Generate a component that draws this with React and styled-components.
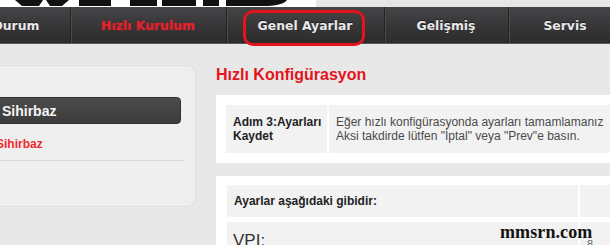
import React from "react";
import styled, { createGlobalStyle } from "styled-components";

const Global = createGlobalStyle`
  html, body { margin: 0; padding: 0; }
  body {
    background: #e8e8e8;
    font-family: "Liberation Sans", Arial, sans-serif;
    overflow: hidden;
    width: 610px;
    height: 245px;
  }
`;

const Page = styled.div`
  width: 610px;
  height: 245px;
  overflow: hidden;
  position: relative;
  display: flex;
  flex-direction: column;
  background: #e8e8e8;
`;

const TopStrip = styled.div`
  height: 7px;
  display: flex;
  flex-shrink: 0;
  background: #e6e6e6;
`;

const LogoArea = styled.div`
  width: 316px;
  height: 7px;
  background: #ffffff;
  display: flex;
`;

const NavBar = styled.nav`
  height: 36px;
  flex-shrink: 0;
  display: flex;
  align-items: stretch;
  margin-left: -38px;
  background: linear-gradient(#464648 0%, #38383a 45%, #2c2c2d 100%);
  border-bottom: 1px solid #5a5a5a;
`;

const NavItem = styled.div`
  position: relative;
  flex-shrink: 0;
  width: ${(p) => p.$w}px;
  display: flex;
  align-items: center;
  justify-content: center;
  font-family: "DejaVu Sans", "Liberation Sans", sans-serif;
  font-weight: bold;
  font-size: 12.4px;
  color: ${(p) => (p.$active ? "#e4222a" : "#e8e8e8")};
  text-shadow: ${(p) =>
    p.$active ? "0 0 2px rgba(230,30,40,0.55)" : "0 -1px 0 rgba(0,0,0,0.5)"};
  box-shadow: ${(p) =>
    p.$first ? "none" : "inset 1px 0 0 #262627, inset 2px 0 0 #4a4a4b"};
  padding-top: 1px;
  box-sizing: border-box;
`;

const Highlight = styled.span`
  position: absolute;
  left: 17px;
  top: 3px;
  width: 122px;
  height: 36px;
  box-sizing: border-box;
  border: 3px solid #e5141c;
  border-radius: 10px;
  pointer-events: none;
`;

const Main = styled.div`
  display: flex;
  align-items: flex-start;
  gap: 20px;
  padding-top: 21px;
`;

const SidePanel = styled.aside`
  flex-shrink: 0;
  width: 216px;
  margin-left: -20px;
  height: 142px;
  box-sizing: border-box;
  background: #efeff0;
  border: 1px solid #dfdfdf;
  border-radius: 9px;
  padding: 31px 14px 0 0;
  display: flex;
  flex-direction: column;
`;

const SideActive = styled.div`
  height: 27px;
  box-sizing: border-box;
  background: linear-gradient(#4c4c4d, #3b3b3c);
  border: 1px solid #2f2f30;
  border-radius: 4px;
  color: #f4f4f4;
  font-weight: bold;
  font-size: 14px;
  display: flex;
  align-items: center;
  padding-left: 20px;
`;

const SideLink = styled.div`
  color: #ef2a2f;
  font-weight: bold;
  font-size: 12px;
  padding: 13px 0 0 15px;
  height: 23px;
`;

const SideRule = styled.div`
  height: 1px;
  background: #d9d9d9;
  margin-right: -3px;
`;

const Content = styled.section`
  flex-shrink: 0;
  width: 440px;
  display: flex;
  flex-direction: column;
`;

const Title = styled.h1`
  margin: 0;
  font-size: 16px;
  font-weight: bold;
  color: #e3141b;
  line-height: 20px;
  height: 30px;
`;

const Box = styled.div`
  background: #ffffff;
  padding: ${(p) => p.$pad};
  margin-bottom: ${(p) => p.$mb || 0}px;
`;

const Table = styled.div`
  display: grid;
  grid-template-columns: ${(p) => p.$cols};
  gap: ${(p) => p.$gap || "0 2px"};
`;

const Cell = styled.div`
  background: #f2f2f3;
  font-size: 12px;
  line-height: 14px;
  color: #4a4a4a;
  padding: ${(p) => p.$pad || "10px 7px"};
  font-weight: ${(p) => (p.$bold ? "bold" : "normal")};
  ${(p) => p.$bold && "color: #222;"}
  white-space: nowrap;
  height: ${(p) => (p.$h ? p.$h + "px" : "auto")};
  box-sizing: border-box;
`;

const BigLabel = styled.span`
  font-size: 17px;
  color: #333;
  line-height: 20px;
`;

const SmallValue = styled.span`
  font-size: 11px;
  color: #666;
  display: inline-block;
  padding-top: 6px;
`;

const Watermark = styled.div`
  position: absolute;
  left: 500px;
  top: 222px;
  font-family: "Liberation Serif", "Times New Roman", serif;
  font-weight: bold;
  font-size: 18px;
  color: #121212;
  letter-spacing: 0.1px;
`;

function Logo() {
  return (
    <svg width="316" height="7" viewBox="0 0 316 7">
      <g fill="#111">
        <polygon points="15,0 43,0 39,6 22,6" />
        <polygon points="46,0 69,0 62,6 50,6" />
        <polygon points="79,0 111,0 111,6 79,6" />
        <polygon points="130,0 157,0 157,6 130,6" />
        <polygon points="162,0 196,0 196,6 162,6" />
        <polygon points="203,0 219,0 219,6 203,6" />
        <path d="M226 0 H287 C284 4 276 6 262 6 H226 Z" />
      </g>
    </svg>
  );
}

const navItems = [
  { label: "Durum", w: 108 },
  { label: "Hızlı Kurulum", w: 156, active: true },
  { label: "Genel Ayarlar", w: 158, mark: true },
  { label: "Gelişmiş", w: 124 },
  { label: "Servis", w: 114 },
];

export default function App() {
  return (
    <>
      <Global />
      <Page>
        <TopStrip>
          <LogoArea>
            <Logo />
          </LogoArea>
        </TopStrip>
        <NavBar>
          {navItems.map((n, i) => (
            <NavItem key={n.label} $w={n.w} $active={n.active} $first={i === 0}>
              {n.label}
              {n.mark && <Highlight />}
            </NavItem>
          ))}
        </NavBar>
        <Main>
          <SidePanel>
            <SideActive>Sihirbaz</SideActive>
            <SideLink>Sihirbaz</SideLink>
            <SideRule />
          </SidePanel>
          <Content>
            <Title>Hızlı Konfigürasyon</Title>
            <Box $pad="10px 10px 10px 10px" $mb={13}>
              <Table $cols="101px 1fr">
                <Cell $bold>
                  Adım 3:Ayarları
                  <br />
                  Kaydet
                </Cell>
                <Cell>
                  Eğer hızlı konfigürasyonda ayarları tamamlamanız
                  <br />
                  Aksi takdirde lütfen "İptal" veya "Prev"e basın.
                </Cell>
              </Table>
            </Box>
            <Box $pad="9px 10px 10px 11px">
              <Table $cols="351px 1fr" $gap="5px 2px">
                <Cell $bold $pad="9px 7px" $h={32}>
                  Ayarlar aşağıdaki gibidir:
                </Cell>
                <Cell $pad="9px 7px" $h={32} />
                <Cell $pad="9px 6px">
                  <BigLabel>VPI:</BigLabel>
                </Cell>
                <Cell $pad="9px 7px">
                  <SmallValue>8</SmallValue>
                </Cell>
              </Table>
            </Box>
          </Content>
        </Main>
        <Watermark>mmsrn.com</Watermark>
      </Page>
    </>
  );
}
